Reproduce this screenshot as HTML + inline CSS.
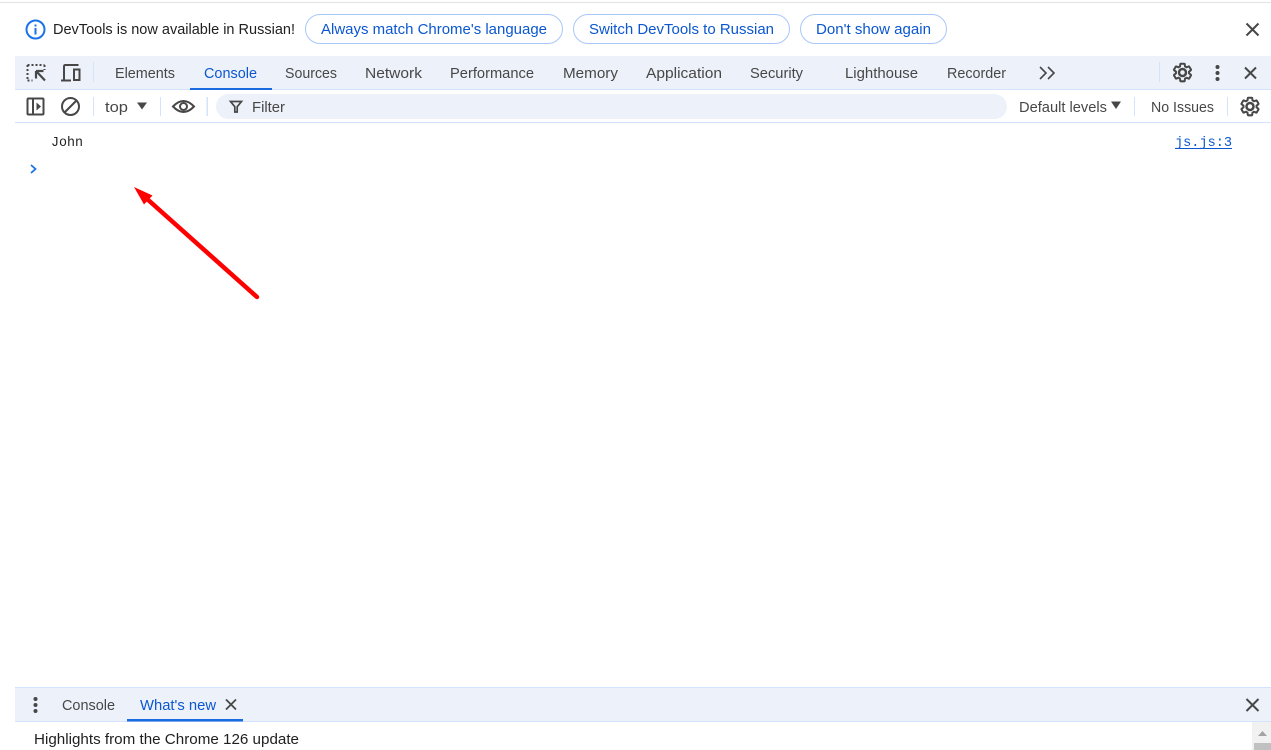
<!DOCTYPE html>
<html><head><meta charset="utf-8"><title>DevTools</title>
<style>
html,body{margin:0;padding:0;width:1271px;height:750px;overflow:hidden;background:#fff}
svg{display:block}
text{font-family:"Liberation Sans",sans-serif;font-size:15px;fill:#474747}
.b{fill:#0b57d0}
.d{fill:#1f1f1f}
.p{font-size:14.7px}
.m{font-family:"Liberation Mono",monospace;font-size:14px}
.i{fill:none;stroke:#474747;stroke-width:2}
</style></head><body>
<svg width="1271" height="750" viewBox="0 0 1271 750" xmlns="http://www.w3.org/2000/svg">
<defs>
<g id="gear" fill="none" stroke="#474747" stroke-width="2.200"><path transform="translate(-11,-11) scale(.917)" d="M19.14 12.94c.04-.3.06-.61.06-.94 0-.32-.02-.64-.07-.94l2.03-1.58c.18-.14.23-.41.12-.61l-1.92-3.32c-.12-.22-.37-.29-.59-.22l-2.39.96c-.5-.38-1.03-.7-1.62-.94l-.36-2.54c-.04-.24-.24-.41-.48-.41h-3.84c-.24 0-.43.17-.47.41l-.36 2.54c-.59.24-1.13.57-1.62.94l-2.39-.96c-.22-.08-.47 0-.59.22L2.74 8.87c-.12.21-.08.47.12.61l2.03 1.58c-.05.3-.09.63-.09.94s.02.64.07.94l-2.03 1.58c-.18.14-.23.41-.12.61l1.92 3.32c.12.22.37.29.59.22l2.39-.96c.5.38 1.03.7 1.62.94l.36 2.54c.05.24.24.41.48.41h3.84c.24 0 .44-.17.47-.41l.36-2.54c.59-.24 1.13-.56 1.62-.94l2.39.96c.22.08.47 0 .59-.22l1.92-3.32c.12-.22.07-.47-.12-.61l-2.01-1.58z"/><circle r="3.500" stroke-width="2.500"/></g>
</defs>
<rect width="1271" height="750" fill="#fff"/>
<rect x="0" y="2" width="1271" height="1" fill="#e3e3e3"/>

<!-- infobar -->
<circle cx="35.500" cy="29.500" r="9" fill="none" stroke="#1a73e8" stroke-width="2"/>
<rect x="34.500" y="28" width="2" height="6.500" fill="#1a73e8"/>
<rect x="34.500" y="24.500" width="2" height="2" fill="#1a73e8"/>
<text x="53" y="34" textLength="242" lengthAdjust="spacingAndGlyphs" class="d">DevTools is now available in Russian!</text>
<rect x="305.500" y="14.500" width="257" height="29" rx="14.500" fill="#fff" stroke="#a8c7fa"/>
<text x="321" y="34" textLength="226" lengthAdjust="spacingAndGlyphs" class="b p">Always match Chrome's language</text>
<rect x="573.500" y="14.500" width="216" height="29" rx="14.500" fill="#fff" stroke="#a8c7fa"/>
<text x="589" y="34" textLength="185" lengthAdjust="spacingAndGlyphs" class="b p">Switch DevTools to Russian</text>
<rect x="800.500" y="14.500" width="146" height="29" rx="14.500" fill="#fff" stroke="#a8c7fa"/>
<text x="816" y="34" textLength="115" lengthAdjust="spacingAndGlyphs" class="b p">Don't show again</text>
<path d="M1246.500 23.500l12 12M1258.500 23.500l-12 12" fill="none" stroke="#474747" stroke-width="2"/>

<!-- main toolbar -->
<rect x="15" y="56" width="1256" height="33" fill="#edf2fa"/>
<rect x="15" y="89" width="1256" height="1" fill="#d3e3fd"/>
<path d="M27.500 65h17M27.500 65v16M27.500 80.500h5" fill="none" stroke="#474747" stroke-width="2" stroke-dasharray="2 2"/>
<path d="M44.500 65v5" fill="none" stroke="#474747" stroke-width="2" stroke-dasharray="2 2"/>
<path d="M36 71v7.500M36 71h7.500M36.500 71.500l8.500 9" fill="none" stroke="#474747" stroke-width="2.200"/>
<path d="M61 80.500h10M64 80v-13.500q0-1.500 1.500-1.500h13" fill="none" stroke="#474747" stroke-width="2"/>
<rect x="74" y="69.500" width="5.500" height="10.500" fill="none" stroke="#474747" stroke-width="2"/>
<rect x="93" y="62" width="1" height="20" fill="#d3e3fd"/>
<text x="115" y="78" textLength="60" lengthAdjust="spacingAndGlyphs">Elements</text>
<text x="204" y="78" textLength="53" lengthAdjust="spacingAndGlyphs" class="b">Console</text>
<rect x="190" y="88" width="82" height="2" fill="#1a6be0"/>
<text x="285" y="78" textLength="52" lengthAdjust="spacingAndGlyphs">Sources</text>
<text x="365" y="78" textLength="57" lengthAdjust="spacingAndGlyphs">Network</text>
<text x="450" y="78" textLength="84" lengthAdjust="spacingAndGlyphs">Performance</text>
<text x="563" y="78" textLength="55" lengthAdjust="spacingAndGlyphs">Memory</text>
<text x="646" y="78" textLength="76" lengthAdjust="spacingAndGlyphs">Application</text>
<text x="750" y="78" textLength="53" lengthAdjust="spacingAndGlyphs">Security</text>
<text x="845" y="78" textLength="73" lengthAdjust="spacingAndGlyphs">Lighthouse</text>
<text x="947" y="78" textLength="59" lengthAdjust="spacingAndGlyphs">Recorder</text>
<path d="M1040 67l6 6-6 6M1048 67l6 6-6 6" fill="none" stroke="#474747" stroke-width="1.600"/>
<rect x="1159" y="62" width="1" height="20" fill="#d3e3fd"/>
<use href="#gear" x="1182.500" y="72.500"/>
<circle cx="1217.500" cy="67" r="2" fill="#474747"/><circle cx="1217.500" cy="73" r="2" fill="#474747"/><circle cx="1217.500" cy="79" r="2" fill="#474747"/>
<path d="M1245 67.500l11 11M1256 67.500l-11 11" fill="none" stroke="#474747" stroke-width="2"/>

<!-- console toolbar -->
<rect x="15" y="122" width="1256" height="1" fill="#d3e3fd"/>
<rect x="27.500" y="98.500" width="16" height="16" rx="1" class="i"/>
<path d="M33 98v17" class="i"/>
<path d="M36.500 102.500l4.500 4-4.500 4z" fill="#474747"/>
<circle cx="70.500" cy="106.500" r="8.500" class="i"/>
<path d="M64.500 112.500l12-12" class="i"/>
<rect x="93" y="97" width="1" height="19" fill="#d3e3fd"/>
<text x="105" y="112" textLength="23" lengthAdjust="spacingAndGlyphs">top</text>
<path d="M137 102.500h10l-5 7z" fill="#474747"/>
<rect x="160" y="97" width="1" height="19" fill="#d3e3fd"/>
<path d="M173 106.500q10.500-11 21 0q-10.500 11-21 0z" class="i"/>
<circle cx="183.500" cy="106.500" r="3.500" class="i"/>
<rect x="206.500" y="97" width="1.500" height="19" fill="#d3e3fd"/>
<rect x="216" y="94" width="791" height="25" rx="12.500" fill="#edf2fa"/>
<path d="M230.500 101.500h11l-4.300 5.200v5.300h-2.400v-5.300z" fill="none" stroke="#474747" stroke-width="1.700"/>
<text x="252" y="112" textLength="33" lengthAdjust="spacingAndGlyphs">Filter</text>
<text x="1019" y="112" textLength="88" lengthAdjust="spacingAndGlyphs">Default levels</text>
<path d="M1111 101.500h10l-5 7.500z" fill="#474747"/>
<rect x="1134" y="97" width="1" height="19" fill="#d3e3fd"/>
<text x="1151" y="112" textLength="63" lengthAdjust="spacingAndGlyphs">No Issues</text>
<rect x="1227" y="97" width="1" height="19" fill="#d3e3fd"/>
<use href="#gear" x="1250" y="106.500"/>

<!-- console -->
<text x="51" y="146" textLength="32" lengthAdjust="spacingAndGlyphs" class="m" style="fill:#1f1f1f">John</text>
<text x="1175" y="146" textLength="57" lengthAdjust="spacingAndGlyphs" class="m" style="fill:#0b57d0">js.js:3</text>
<rect x="1175" y="148" width="57" height="1" fill="#0b57d0"/>
<path d="M31 165l4.500 4-4.500 4" fill="none" stroke="#1a73e8" stroke-width="1.800"/>

<!-- red arrow -->
<path d="M257 297L146 198" stroke="#f00" stroke-width="4.500" stroke-linecap="round" fill="none"/>
<path d="M134 187L152.500 195.500L144 204.500z" fill="#f00"/>

<!-- drawer -->
<rect x="15" y="687" width="1256" height="1" fill="#d3e3fd"/>
<rect x="15" y="688" width="1256" height="33" fill="#edf2fa"/>
<rect x="15" y="721" width="1256" height="1" fill="#d3e3fd"/>
<circle cx="35.500" cy="699" r="2" fill="#474747"/><circle cx="35.500" cy="705" r="2" fill="#474747"/><circle cx="35.500" cy="711" r="2" fill="#474747"/>
<text x="62" y="710" textLength="53" lengthAdjust="spacingAndGlyphs">Console</text>
<text x="140" y="710" textLength="76" lengthAdjust="spacingAndGlyphs" class="b">What's new</text>
<path d="M226 699.500l10 10M236 699.500l-10 10" fill="none" stroke="#474747" stroke-width="1.800"/>
<rect x="127" y="719" width="116" height="2.500" fill="#1a6be0"/>
<path d="M1246.500 699l12 12M1258.500 699l-12 12" fill="none" stroke="#474747" stroke-width="2"/>
<text x="34" y="744" textLength="265" lengthAdjust="spacingAndGlyphs" class="d">Highlights from the Chrome 126 update</text>

<!-- scrollbar -->
<rect x="1252" y="722" width="19" height="28" fill="#f1f1f1"/>
<path d="M1258 736h9l-4.500-5z" fill="#a3a3a3"/>
<rect x="1254" y="743" width="17" height="7" fill="#c1c1c1"/>
</svg>
</body></html>
